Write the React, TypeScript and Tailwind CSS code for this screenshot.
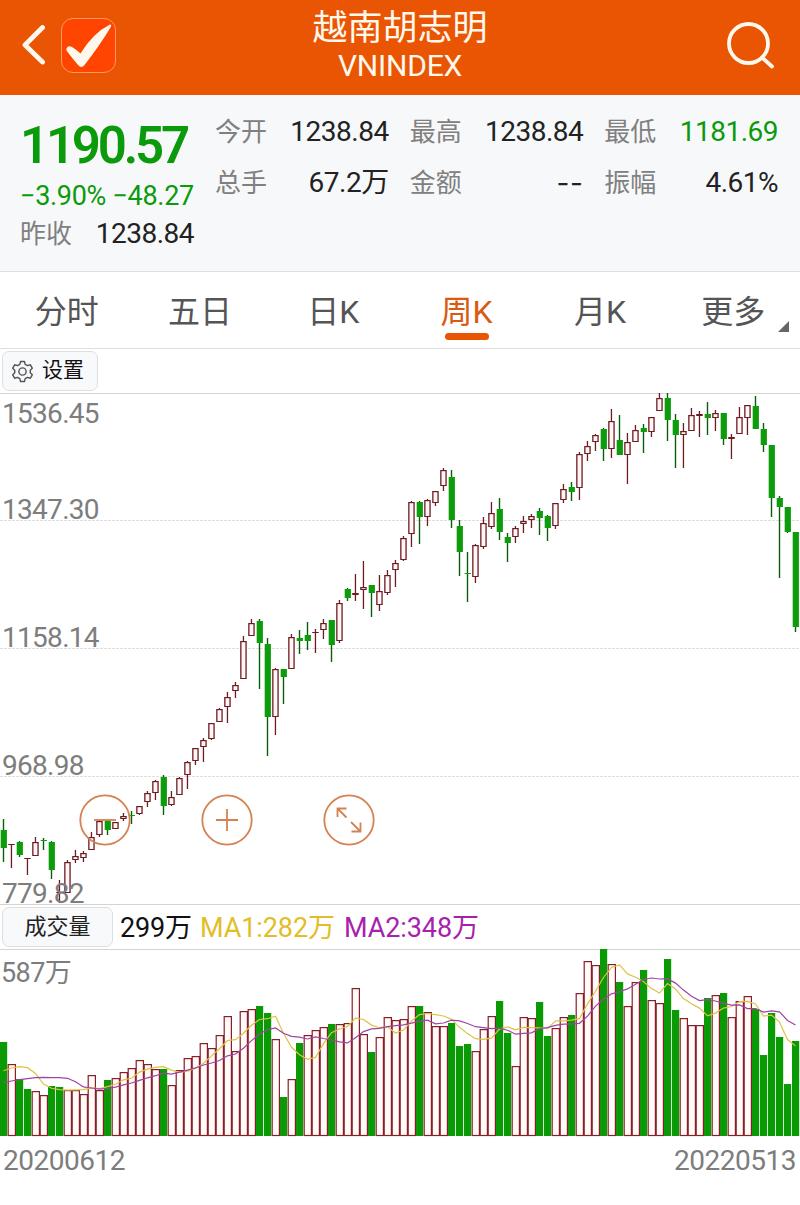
import type { ReactNode } from "react";

type Candle = [color: "r" | "g", high: number, top: number, bottom: number, low: number];

// one entry per week: high, body top, body bottom, low
const candles: Candle[] = [
  ["g", 819, 830, 848, 862], ["r", 844, 844, 845, 868], ["g", 841, 842, 855, 857], ["r", 858, 858, 859, 875],
  ["r", 837, 842, 856, 856], ["g", 838, 840, 841, 850], ["g", 841, 842, 870, 879], ["r", 880, 892, 893, 903],
  ["r", 860, 862, 893, 893], ["r", 850, 856, 860, 863], ["r", 851, 853, 858, 862], ["r", 832, 837, 850, 850],
  ["r", 820, 821, 835, 837], ["g", 820, 821, 830, 835], ["r", 822, 822, 829, 829], ["r", 813, 816, 819, 821],
  ["g", 811, 815, 816, 824], ["r", 806, 806, 814, 815], ["r", 791, 793, 802, 807], ["r", 780, 781, 793, 800],
  ["g", 775, 777, 806, 815], ["r", 791, 797, 805, 806], ["r", 777, 778, 795, 795], ["r", 761, 762, 775, 789],
  ["r", 748, 748, 761, 765], ["r", 738, 740, 747, 762], ["r", 723, 723, 739, 740], ["r", 708, 709, 722, 722],
  ["r", 692, 697, 707, 723], ["r", 682, 685, 691, 698], ["r", 636, 641, 679, 679], ["r", 619, 623, 636, 636],
  ["g", 619, 621, 643, 689], ["g", 638, 644, 717, 756], ["r", 668, 669, 717, 735], ["g", 669, 669, 677, 704],
  ["r", 634, 637, 669, 669], ["g", 630, 638, 641, 654], ["g", 622, 635, 641, 650], ["r", 629, 632, 633, 653],
  ["r", 619, 623, 630, 639], ["g", 620, 620, 645, 662], ["r", 600, 603, 641, 643], ["g", 588, 589, 598, 601],
  ["r", 574, 593, 595, 601], ["r", 561, 587, 590, 609], ["g", 585, 585, 593, 617], ["r", 575, 591, 605, 611],
  ["r", 570, 575, 593, 595], ["r", 560, 563, 570, 587], ["r", 536, 538, 560, 561], ["r", 501, 502, 534, 547],
  ["g", 501, 502, 517, 544], ["r", 499, 500, 517, 526], ["r", 491, 491, 503, 506], ["r", 468, 470, 486, 491],
  ["g", 470, 477, 520, 528], ["g", 520, 526, 552, 576], ["g", 552, 573, 574, 602], ["r", 544, 545, 577, 583],
  ["r", 517, 523, 547, 549], ["r", 502, 513, 527, 529], ["g", 498, 509, 532, 540], ["g", 533, 537, 543, 562],
  ["r", 526, 528, 537, 543], ["r", 516, 521, 524, 533], ["r", 514, 516, 520, 528], ["g", 508, 511, 518, 535],
  ["g", 515, 516, 528, 541], ["r", 503, 503, 526, 529], ["r", 484, 489, 500, 503], ["g", 482, 487, 492, 501],
  ["r", 452, 454, 488, 500], ["r", 441, 446, 454, 461], ["r", 434, 435, 442, 451], ["g", 428, 429, 449, 461],
  ["r", 409, 421, 449, 458], ["g", 415, 440, 455, 455], ["r", 433, 442, 455, 484], ["r", 425, 430, 442, 442],
  ["g", 424, 428, 432, 453], ["r", 417, 417, 432, 437], ["r", 393, 398, 411, 411], ["g", 393, 398, 420, 441],
  ["g", 414, 420, 435, 468], ["r", 423, 431, 435, 468], ["r", 408, 415, 431, 431], ["r", 411, 414, 416, 437],
  ["g", 402, 414, 418, 435], ["r", 410, 413, 418, 431], ["g", 413, 413, 439, 445], ["r", 434, 437, 439, 459],
  ["r", 407, 417, 434, 434], ["r", 405, 405, 418, 435], ["g", 396, 406, 429, 429], ["g", 423, 429, 445, 452],
  ["g", 445, 445, 498, 517], ["g", 496, 498, 507, 578], ["g", 507, 507, 532, 533], ["g", 532, 532, 627, 632],
];

// bar tops, in thirds of a pixel below the volume header
const volumes = [
  426, 496, 538, 566, 575, 587, 558, 560, 572, 572, 584, 529, 574, 540, 536, 518, 506, 482, 494, 509,
  508, 559, 514, 476, 470, 431, 447, 407, 352, 457, 335, 329, 319, 340, 421, 590, 539, 430, 409, 393,
  385, 373, 375, 371, 268, 405, 457, 415, 355, 363, 361, 322, 318, 338, 381, 381, 370, 439, 433, 457,
  391, 352, 304, 398, 502, 355, 357, 306, 409, 387, 355, 346, 283, 187, 199, 147, 196, 245, 321, 250,
  211, 302, 313, 178, 330, 356, 379, 379, 294, 289, 280, 355, 307, 290, 326, 464, 339, 411, 552, 422,
];

const fallingVolumes = new Set([
  0, 2, 3, 6, 7, 13, 20, 32, 33, 35, 37, 41, 46, 52, 56, 57, 58, 62, 63, 67, 68, 71, 75, 77, 80, 83, 84, 88, 90,
  94, 95, 96, 97, 98, 99,
]);

const centerX = (i: number) => i * 8 + 3.5;

function movingAverage(period: number, head: number[]) {
  return volumes
    .map((_, i) => {
      const value =
        i < head.length
          ? head[i]
          : volumes.slice(i - period + 1, i + 1).reduce((a, b) => a + b, 0) / period;
      return `${centerX(i)},${(900 + value / 3).toFixed(1)}`;
    })
    .join(" ");
}

const ma1 = movingAverage(5, [512, 504, 500, 503]);
const ma2 = movingAverage(10, [548, 543, 539, 536, 533, 532, 533, 533, 535]);

const quotes = [
  { label: "今开", value: "1238.84", style: "text-[#222]" },
  { label: "最高", value: "1238.84", style: "text-[#222]" },
  { label: "最低", value: "1181.69", style: "text-[#0b9a0b]" },
  { label: "总手", value: "67.2万", style: "text-[#222]" },
  { label: "金额", value: "--", style: "font-[Inter,sans-serif] tracking-[0.5px] text-[#222]" },
  { label: "振幅", value: "4.61%", style: "text-[#222]" },
];

const tabs = ["分时", "五日", "日K", "周K", "月K", "更多"];

function Header() {
  return (
    <header className="flex h-[95px] items-center justify-between bg-[#ea5504] px-[22px] text-[#fff8ec]">
      <div className="flex w-[120px] items-center gap-[16px] pb-[5px]">
        <svg className="h-[40px] w-[23px]" viewBox="0 0 23 40" fill="none" stroke="currentColor" strokeWidth="4.8" strokeLinecap="round" strokeLinejoin="round">
          <path d="M20.5 2.5 L3 20 L20.5 37" />
        </svg>
        <div className="flex h-[55px] w-[55px] items-center justify-center rounded-[12px] border border-[#ff9a66] bg-[#ff4500]">
          <svg width="53" height="53" viewBox="0 0 53 53" fill="currentColor">
            <path d="M4.5 29.500 Q5.500 26.500 9 27.500 Q13 29.500 18.500 34.500 Q31 14 48 5.500 Q50 5.500 48.500 8.500 Q38 26 22.500 46 Q19.500 49.500 16.500 46.500 Q10 39 4.500 31.500 Z" />
          </svg>
        </div>
      </div>
      <div className="flex flex-col items-center pb-[2px]">
        <h1 className="text-[35px] leading-[38px]">越南胡志明</h1>
        <p className="text-[30px] leading-[36px] tracking-[-0.2px]">VNINDEX</p>
      </div>
      <div className="flex w-[120px] justify-end pb-[4px]">
        <svg className="mr-[3px] h-[48px] w-[49px]" viewBox="0 0 49 48" fill="none" stroke="currentColor" strokeWidth="3.800" strokeLinecap="round">
          <circle cx="22.500" cy="21.500" r="19.500" />
          <path d="M36 35.500 L46 44.500" />
        </svg>
      </div>
    </header>
  );
}

function Quote() {
  return (
    <section className="flex h-[177px] gap-[21px] border-b border-[#dcdfe1] bg-[#f7f8fa] pr-[22px] pl-[20px] text-[28px] tracking-[-0.5px]">
      <div className="w-[174px] shrink-0 pt-[22px] text-[#0b9a0b]">
        <p className="h-[58px] text-[51px] leading-[58px] font-semibold tracking-[-3.2px]">1190.57</p>
        <p className="h-[39px] text-[27px] leading-[42px] tracking-[-0.3px] whitespace-nowrap">−3.90% −48.27</p>
        <p className="flex h-[40px] items-center justify-between text-[#222]">
          <span className="text-[26px] tracking-normal text-[#808080]">昨收</span>
          <span>1238.84</span>
        </p>
      </div>
      <dl className="grid h-fit grow grid-cols-3 gap-x-[21px] gap-y-[11px] pt-[17px]">
        {quotes.map((q) => (
          <div key={q.label} className="flex h-[40px] items-center justify-between">
            <dt className="text-[26px] tracking-normal text-[#808080]">{q.label}</dt>
            <dd className={q.style}>{q.value}</dd>
          </div>
        ))}
      </dl>
    </section>
  );
}

function Tabs() {
  return (
    <nav className="grid h-[77px] grid-cols-6 border-b border-[#dcdfe1] bg-white text-[32px] text-[#555]">
      {tabs.map((tab) => (
        <button
          key={tab}
          className={
            tab === "周K"
              ? "relative flex justify-center text-[#d95a10]"
              : "relative flex justify-center"
          }
        >
          <span className="leading-[80px]">{tab}</span>
          {tab === "周K" && <span className="absolute top-[61px] h-[7px] w-[44px] rounded-full bg-[#ea5504]" />}
          {tab === "更多" && (
            <svg className="absolute top-[49px] right-[11px]" width="11" height="11" viewBox="0 0 11 11">
              <path d="M11 0 V11 H0 Z" fill="#666" />
            </svg>
          )}
        </button>
      ))}
    </nav>
  );
}

function RoundButton({ label, children }: { label: string; children: ReactNode }) {
  return (
    <button aria-label={label} className="h-[52px] w-[52px]">
      <svg width="52" height="52" viewBox="0 0 52 52" fill="none" stroke="#d48252" strokeWidth="1.800">
        <circle cx="26" cy="26" r="24.700" />
        {children}
      </svg>
    </button>
  );
}

function PriceChart() {
  return (
    <section className="relative h-[512px]">
      <svg className="block" width="800" height="512" viewBox="0 393 800 512">
        <path d="M0 520.500 H800 M0 648.500 H800 M0 776.500 H800" stroke="#dfdfdf" strokeDasharray="3 1" />
        <path d="M0 393.500 H800 M0 904.500 H800" stroke="#d4d4d4" />
        {candles.map(([color, high, top, bottom, low], i) => {
          const x = i * 8;
          if (color === "g") {
            return (
              <g key={i} fill="#0c9c0c">
                <rect x={x + 2.8} y={high} width="1.400" height={low - high} fill="#075f07" />
                <rect x={x + 0.7} y={top} width="6.200" height={bottom - top} />
              </g>
            );
          }
          return (
            <g key={i} fill="#6e1a22">
              <rect x={x + 2.8} y={high} width="1.300" height={low - high} />
              <rect x={x + 0.2} y={top} width="6.500" height={bottom - top} />
              {bottom - top > 2 && (
                <rect x={x + 1.5} y={top + 1.2} width="3.900" height={bottom - top - 2.2} fill="#fff8f6" />
              )}
            </g>
          );
        })}
      </svg>
      <div className="absolute inset-0 flex flex-col px-[2px] text-[28px] leading-[34px] tracking-[-0.7px] text-[#7d7d7d]">
        <span className="mt-[4px] h-[96px]">1536.45</span>
        <span className="h-[128px]">1347.30</span>
        <span className="h-[128px]">1158.14</span>
        <span className="h-[128px]">968.98</span>
        <span className="h-[28px]">779.82</span>
      </div>
      <div className="absolute top-[401px] left-[79px] flex gap-[70px]">
        <RoundButton label="缩小">
          <path d="M15 26 H37" />
        </RoundButton>
        <RoundButton label="放大">
          <path d="M15 26 H37 M26 15 V37" />
        </RoundButton>
        <RoundButton label="全屏">
          <path d="M23.500 23.500 L14.500 14.500 M14.500 23 V14.500 H23.500 M28 28 L37.500 37.500 M37.500 28.500 V37.500 H28.500" />
        </RoundButton>
      </div>
    </section>
  );
}

function VolumeChart() {
  return (
    <section>
      <div className="flex h-[45px] items-center border-b border-[#d4d4d4] pl-[2px] text-[27px]">
        <button className="h-[40px] w-[111px] rounded-[7px] border border-[#dde0e3] bg-[#f7f9fa] text-[22px] leading-[38px] text-[#222]">
          成交量
        </button>
        <span className="ml-[7px] w-[80px] pt-[2px] tracking-[-0.2px] text-[#111]">299万</span>
        <span className="w-[144px] pt-[2px] tracking-[-0.1px] text-[#e3bd27]">MA1:282万</span>
        <span className="pt-[2px] tracking-[-0.1px] text-[#a81fae]">MA2:348万</span>
      </div>
      <div className="relative h-[187px]">
        <svg className="absolute -top-[1px] left-0" width="800" height="188" viewBox="0 949 800 188">
          {volumes.map((v, i) => {
            const y = Math.round(900 + v / 3);
            return fallingVolumes.has(i) ? (
              <rect key={i} x={i * 8} y={y} width="7.200" height={1136 - y} fill="#0a9a05" />
            ) : (
              <rect key={i} x={i * 8 + 0.2} y={y - 0.4} width="7.200" height={1135.900 - y} fill="#fffaf8" stroke="#852029" strokeWidth="1.200" />
            );
          })}
          <polyline points={ma1} fill="none" stroke="#dfc243" strokeWidth="1.200" />
          <polyline points={ma2} fill="none" stroke="#a044a4" strokeWidth="1.200" />
        </svg>
        <span className="relative block pt-[5px] pl-[1px] text-[27px] leading-[36px] tracking-[-0.6px] text-[#7d7d7d]">587万</span>
      </div>
      <div className="flex justify-between pt-[6px] pr-[4px] pl-[3px] text-[28px] leading-[36px] tracking-[-0.5px] text-[#7d7d7d]">
        <span>20200612</span>
        <span>20220513</span>
      </div>
    </section>
  );
}

export default function App() {
  return (
    <main className="h-[1205px] w-[800px] overflow-hidden bg-white font-[Roboto,'Noto_Sans_CJK_SC',sans-serif]">
      <Header />
      <Quote />
      <Tabs />
      <div className="flex h-[44px] items-center pl-[2px]">
        <button className="flex h-[40px] w-[96px] items-center gap-[8px] rounded-[7px] border border-[#dde0e3] bg-[#f7f9fa] pl-[8px] text-[21px] text-[#111]">
          <svg width="23" height="23" viewBox="0 0 24 24" fill="none" stroke="#555" strokeWidth="1.500" strokeLinejoin="round">
            <path d="M10 1.500 H14 L14.800 4.500 L17.200 5.900 L20.200 5 L22.200 8.500 L20.100 10.600 V13.400 L22.200 15.500 L20.200 19 L17.200 18.100 L14.800 19.500 L14 22.500 H10 L9.200 19.500 L6.800 18.100 L3.800 19 L1.800 15.500 L3.900 13.400 V10.600 L1.800 8.500 L3.800 5 L6.800 5.900 L9.200 4.500 Z" />
            <circle cx="12" cy="12" r="3.800" />
          </svg>
          设置
        </button>
      </div>
      <PriceChart />
      <VolumeChart />
    </main>
  );
}
